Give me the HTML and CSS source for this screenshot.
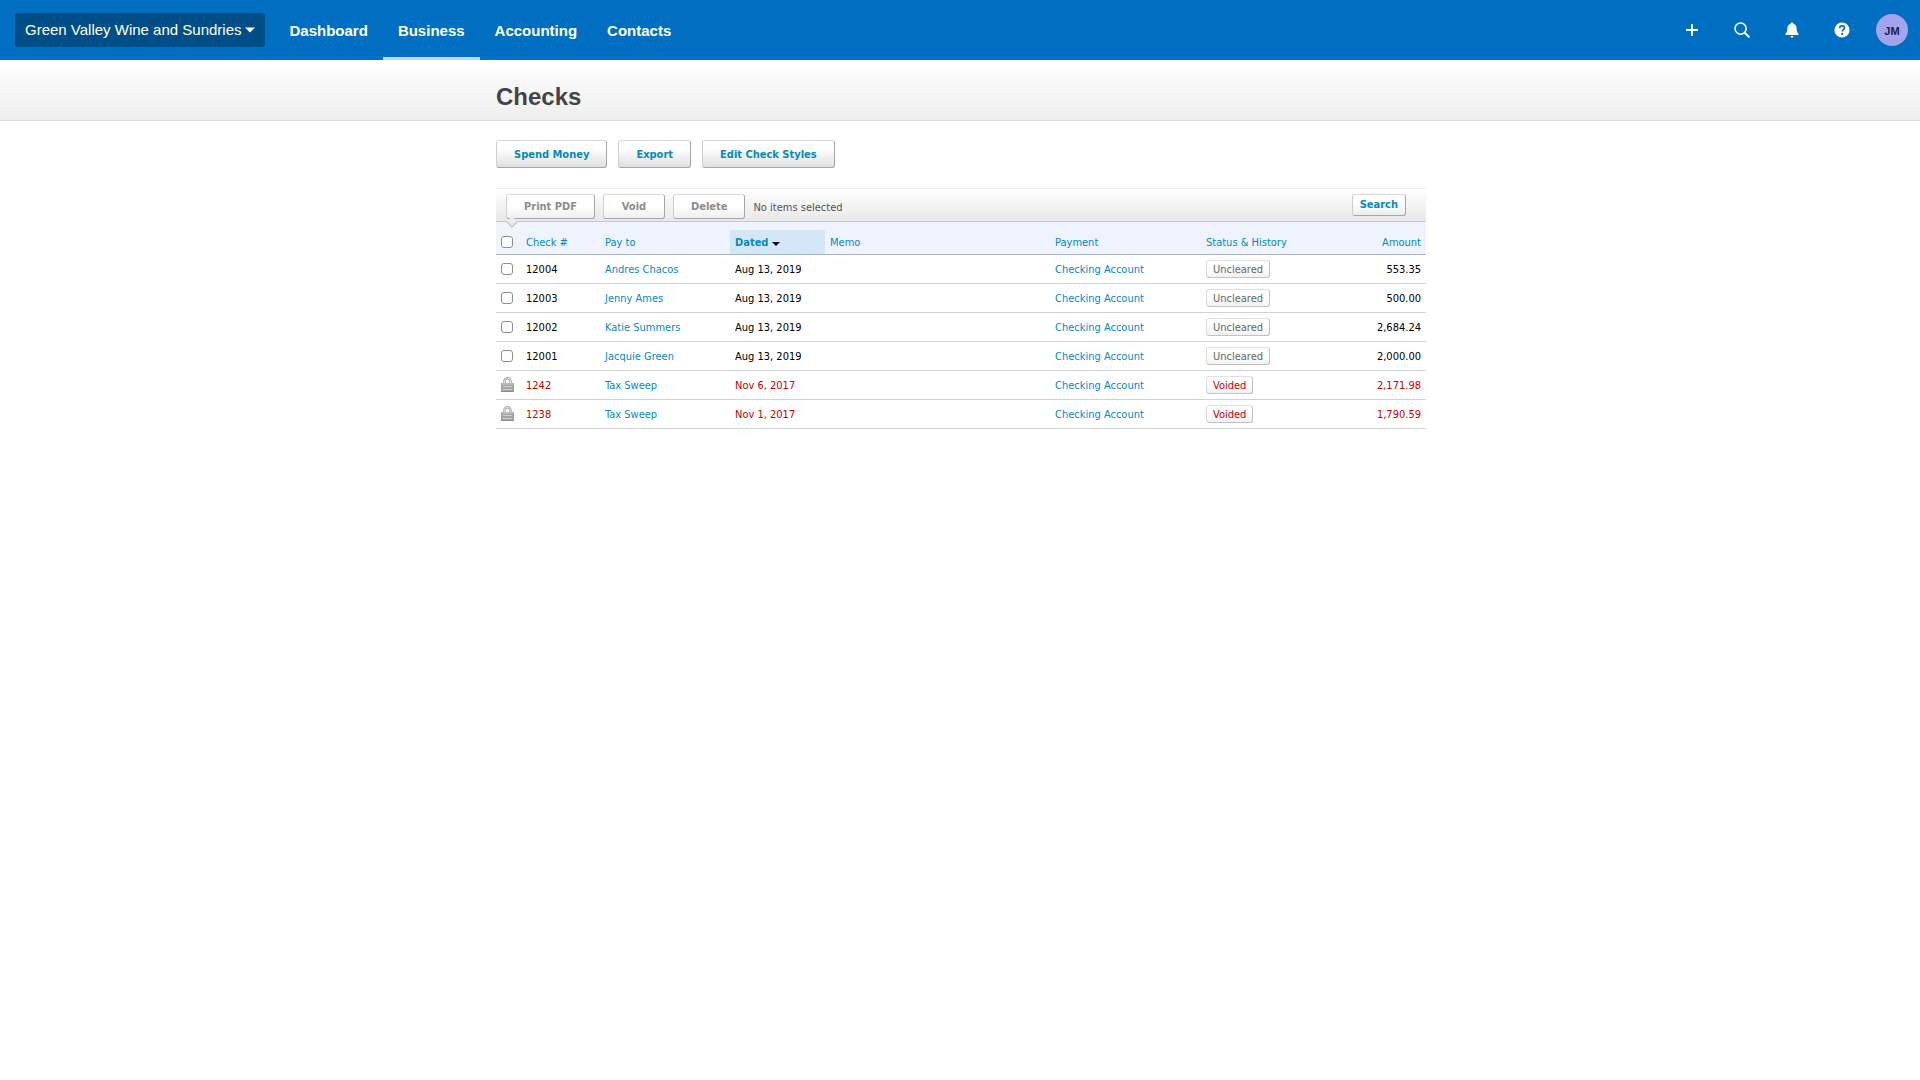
FILE: index.html
```html
<!DOCTYPE html>
<html lang="en">
<head>
    <meta charset="utf-8">
    <title>Checks</title>
    <link rel="stylesheet" href="styles.css">
</head>
<body>

<header class="topbar">
    <button class="org" type="button">Green Valley Wine and Sundries
        <svg width="10" height="6" viewBox="0 0 10 6"><path d="M0 0.5h10L5 5.5z"/></svg>
    </button>
    <nav class="nav">
        <a href="#">Dashboard</a>
        <a href="#" class="active">Business</a>
        <a href="#">Accounting</a>
        <a href="#">Contacts</a>
    </nav>
    <div class="tools">
        <button type="button" aria-label="Create new">
            <svg width="16" height="16" viewBox="0 0 16 16"><path d="M7 2h2v5h5v2H9v5H7V9H2V7h5z"/></svg>
        </button>
        <button type="button" aria-label="Search">
            <svg width="16" height="16" viewBox="0 0 16 16">
                <circle cx="6.6" cy="6.6" r="5.6" fill="none" stroke="#fff" stroke-width="1.5"/>
                <path d="M10.6 10.6l4.8 4.8" stroke="#fff" stroke-width="2"/>
            </svg>
        </button>
        <button type="button" aria-label="Notifications">
            <svg width="16" height="16" viewBox="0 0 16 16">
                <path d="M8 .5c.8 0 1.3.5 1.4 1.2 2 .6 3.1 2.2 3.2 4.3.1 3 .5 4.5 1.900 5.500v1.500h-13v-1.500c1.400-1 1.800-2.500 1.900-5.500.1-2.100 1.200-3.700 3.200-4.300C6.700 1 7.200.5 8 .5z"/>
                <path d="M6.500 14h3c-.2 1-.8 1.500-1.500 1.500S6.700 15 6.500 14z"/>
            </svg>
        </button>
        <button type="button" aria-label="Help">
            <svg width="16" height="16" viewBox="0 0 16 16">
                <circle cx="8" cy="8" r="7.600"/>
                <path d="M5.700 6.200c0-1.500 1-2.300 2.400-2.300s2.300.8 2.300 2c0 1.700-2.200 1.700-2.200 3.600" fill="none" stroke="#006fc1" stroke-width="1.700"/>
                <circle cx="8.200" cy="11.900" r="1.100" fill="#006fc1"/>
            </svg>
        </button>
        <button class="avatar" type="button">JM</button>
    </div>
</header>

<div class="title">
    <h1>Checks</h1>
</div>

<main class="content">
    <div class="actions">
        <button class="btn" type="button">Spend Money</button>
        <button class="btn" type="button">Export</button>
        <button class="btn" type="button">Edit Check Styles</button>
    </div>

    <div class="toolbar">
        <button class="btn small off" type="button">Print PDF</button>
        <button class="btn small off" type="button">Void</button>
        <button class="btn small off" type="button">Delete</button>
        <span>No items selected</span>
        <button class="btn search" type="button">Search</button>
    </div>

    <table class="checks">
        <colgroup>
            <col class="c-box"><col class="c-num"><col class="c-pay"><col class="c-date">
            <col><col class="c-acc"><col class="c-status"><col class="c-amount">
        </colgroup>
        <thead>
            <tr>
                <th class="mid"><input type="checkbox" aria-label="Select all"></th>
                <th><a href="#">Check #</a></th>
                <th><a href="#">Pay to</a></th>
                <th class="sorted"><a href="#">Dated <svg width="8" height="4" viewBox="0 0 8 4"><path d="M0 0h8L4 4z"/></svg></a></th>
                <th><a href="#">Memo</a></th>
                <th><a href="#">Payment</a></th>
                <th><a href="#">Status &amp; History</a></th>
                <th class="amount"><a href="#">Amount</a></th>
            </tr>
        </thead>
        <tbody>
            <tr>
                <td class="mid"><input type="checkbox" aria-label="Select 12004"></td>
                <td>12004</td>
                <td><a href="#">Andres Chacos</a></td>
                <td>Aug 13, 2019</td>
                <td></td>
                <td><a href="#">Checking Account</a></td>
                <td class="mid"><button class="status" type="button">Uncleared</button></td>
                <td class="amount">553.35</td>
            </tr>
            <tr>
                <td class="mid"><input type="checkbox" aria-label="Select 12003"></td>
                <td>12003</td>
                <td><a href="#">Jenny Ames</a></td>
                <td>Aug 13, 2019</td>
                <td></td>
                <td><a href="#">Checking Account</a></td>
                <td class="mid"><button class="status" type="button">Uncleared</button></td>
                <td class="amount">500.00</td>
            </tr>
            <tr>
                <td class="mid"><input type="checkbox" aria-label="Select 12002"></td>
                <td>12002</td>
                <td><a href="#">Katie Summers</a></td>
                <td>Aug 13, 2019</td>
                <td></td>
                <td><a href="#">Checking Account</a></td>
                <td class="mid"><button class="status" type="button">Uncleared</button></td>
                <td class="amount">2,684.24</td>
            </tr>
            <tr>
                <td class="mid"><input type="checkbox" aria-label="Select 12001"></td>
                <td>12001</td>
                <td><a href="#">Jacquie Green</a></td>
                <td>Aug 13, 2019</td>
                <td></td>
                <td><a href="#">Checking Account</a></td>
                <td class="mid"><button class="status" type="button">Uncleared</button></td>
                <td class="amount">2,000.00</td>
            </tr>
            <tr class="voided">
                <td class="mid"><svg class="lock" width="13" height="15" viewBox="0 0 13 15"><use href="#lock"/></svg></td>
                <td>1242</td>
                <td><a href="#">Tax Sweep</a></td>
                <td>Nov 6, 2017</td>
                <td></td>
                <td><a href="#">Checking Account</a></td>
                <td class="mid"><button class="status" type="button">Voided</button></td>
                <td class="amount">2,171.98</td>
            </tr>
            <tr class="voided">
                <td class="mid"><svg class="lock" width="13" height="15" viewBox="0 0 13 15"><use href="#lock"/></svg></td>
                <td>1238</td>
                <td><a href="#">Tax Sweep</a></td>
                <td>Nov 1, 2017</td>
                <td></td>
                <td><a href="#">Checking Account</a></td>
                <td class="mid"><button class="status" type="button">Voided</button></td>
                <td class="amount">1,790.59</td>
            </tr>
        </tbody>
    </table>
</main>

<!-- shared padlock for locked rows -->
<svg class="defs" width="0" height="0">
    <symbol id="lock" viewBox="0 0 13 15">
        <path d="M3.500 6V4a3 2.800 0 0 1 6 0v2" fill="none" stroke="#a2a2a2" stroke-width="2.400"/>
        <path d="M3.500 6V4a3 2.800 0 0 1 6 0v2" fill="none" stroke="#dedede" stroke-width="1"/>
        <path d="M0 6h13v9H0z" fill="#a4a4a4"/>
        <path d="M1 6h11v2H1z" fill="#bcbcbc"/>
        <path d="M2 9h9v1H2zM2 12h9v1H2z" fill="#d0d0d0"/>
        <path d="M0 14h13v1H0z" fill="#8e8e8e"/>
    </symbol>
</svg>

</body>
</html>
```
FILE: styles.css
```css
* {
    box-sizing: border-box;
}
body {
    margin: 0;
    background: #fff;
    color: #000;
    font: 11px/16px "DejaVu Sans Condensed", Tahoma, "DejaVu Sans", sans-serif;
}
a {
    color: #048abf;
    text-decoration: none;
}
button {
    font: inherit;
    cursor: pointer;
}

/* top bar */
.topbar {
    display: flex;
    align-items: center;
    height: 60px;
    padding: 0 12px 0 15px;
    background: #006fc1;
    font-family: "Liberation Sans", Arial, sans-serif;
}
.org {
    display: flex;
    align-items: center;
    gap: 3px;
    height: 34px;
    padding: 0 10px;
    border: 0;
    border-radius: 3px;
    background: #004e87;
    color: #fff;
    font-size: 15px;
}
.topbar svg {
    fill: #fff;
}
.nav {
    display: flex;
    margin-left: 10px;
}
.nav a {
    height: 60px;
    padding: 0 15px;
    color: #fff;
    font-size: 15px;
    font-weight: bold;
    line-height: 61px;
}
.nav .active {
    box-shadow: inset 0 -3px #c0d8ee;
}
.tools {
    display: flex;
    align-items: center;
    margin-left: auto;
}
.tools button {
    display: grid;
    place-items: center;
    width: 50px;
    height: 60px;
    padding: 0;
    border: 0;
    background: none;
}
.tools .avatar {
    width: 32px;
    height: 32px;
    margin-left: 9px;
    padding-top: 2px;
    border-radius: 50%;
    background: #a3a3ee;
    color: #1e1e49;
    font-weight: bold;
}

/* page title */
.title {
    height: 61px;
    border-bottom: 1px solid #dcdcdc;
    background: linear-gradient(#fff, #eee);
}
.title h1 {
    max-width: 932px;
    margin: 0 auto;
    padding: 13px 0 0 2px;
    color: #444;
    font: bold 24px/48px "Liberation Sans", Arial, sans-serif;
}

.content {
    max-width: 932px;
    margin: 0 auto;
    padding: 19px 0 0 2px;
}

/* buttons */
.btn {
    height: 28px;
    padding: 2px 17px 0;
    border: 1px solid #a6a6a6;
    border-top-color: #dadada;
    border-left-color: #cfcfcf;
    border-radius: 3px;
    background: linear-gradient(#fff 30%, #dfdfdf);
    color: #048abf;
    font-weight: bold;
}
.actions {
    display: flex;
    gap: 11px;
    margin-bottom: 20px;
}
.toolbar {
    position: relative;
    display: flex;
    align-items: center;
    gap: 8px;
    height: 34px;
    padding: 2px 20px 0 10px;
    border-top: 1px solid #ececec;
    border-bottom: 1px solid #c6c6c6;
    background: linear-gradient(#fff, #e8e8e8);
    color: #555;
}
.toolbar span {
    padding-top: 3px;
}
/* little pointer towards the select-all box */
.toolbar::after {
    content: "";
    position: absolute;
    left: 12px;
    bottom: -5px;
    width: 7px;
    height: 7px;
    border: solid #c0c0c0;
    border-width: 0 1px 1px 0;
    background: #eaeaea;
    transform: rotate(45deg);
}
.btn.small {
    min-width: 62px;
    height: 25px;
    padding: 1px 17px 0;
}
.btn.off {
    background: linear-gradient(#fff 50%, #f0f0f0);
    color: #8c8c8c;
}
.btn.search {
    height: 22px;
    margin: 0 0 3px auto;
    padding: 1px 7px 0;
    background: linear-gradient(#fff 40%, #ececec);
}

/* list of checks */
.checks {
    width: 100%;
    border-collapse: separate;
    border-spacing: 0;
    table-layout: fixed;
}
.c-box { width: 25px; }
.c-num { width: 79px; }
.c-pay { width: 130px; }
.c-date { width: 95px; }
.c-acc { width: 151px; }
.c-status { width: 125px; }
.c-amount { width: 100px; }

.checks th {
    height: 33px;
    padding: 10px 5px 0;
    border-bottom: 1px solid #a9b4c4;
    background: #eff3fe;
    font-weight: normal;
    text-align: left;
}
.checks .sorted {
    background: linear-gradient(#eff3fe 8px, #d4e7f6 8px);
    font-weight: bold;
}
.checks td {
    height: 29px;
    padding: 2px 5px 0;
    border-bottom: 1px solid #d3d3d3;
}
/* cells holding a control sit on the row's middle, not on the text line */
.checks th.mid {
    padding-top: 8px;
}
.checks td.mid {
    padding-top: 0;
}
.checks .amount {
    text-align: right;
}
.checks input {
    display: block;
    appearance: none;
    width: 12px;
    height: 12px;
    margin: 0;
    border: 1px solid #8e8e8e;
    border-radius: 3px;
    background: #fff;
}
.voided {
    color: #c80000;
}
.status {
    display: block;
    height: 18px;
    padding: 1px 6px 0;
    border: 1px solid #c2c2c2;
    border-top-color: #e0e0e0;
    border-left-color: #dadada;
    border-radius: 3px;
    background: linear-gradient(#fff 40%, #f2f2f2);
    color: #666;
    line-height: 16px;
}
.voided .status {
    color: #c80000;
}
.lock {
    display: block;
    margin-bottom: 1px;
}
.defs {
    position: absolute;
}
```
